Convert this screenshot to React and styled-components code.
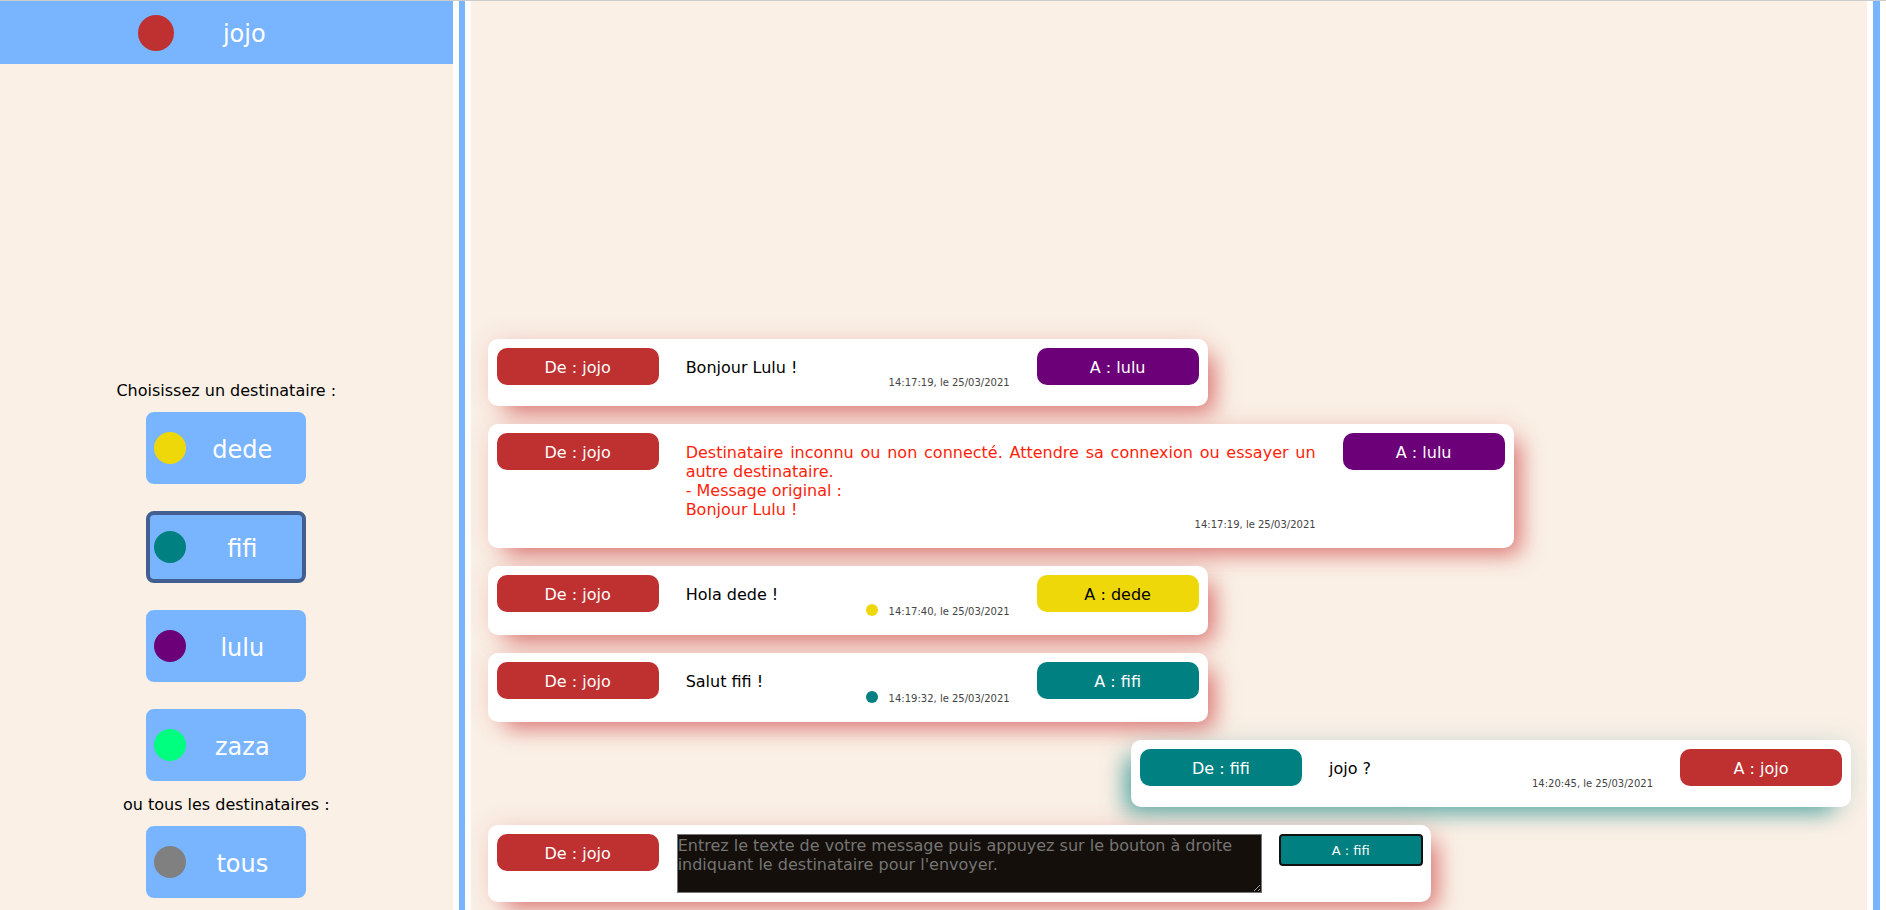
import React, { useState } from 'react';
import styled, { createGlobalStyle } from 'styled-components';

const GlobalStyle = createGlobalStyle`
  *, *::before, *::after { box-sizing: border-box; }
  body {
    margin: 0;
    background: #fff;
    color: #000;
    font-family: Verdana, "DejaVu Sans", sans-serif;
    font-size: 16px;
    line-height: 19px;
  }
`;

const Page = styled.div`
  display: flex;
  height: 100vh;
  border-top: 1px solid #ccc;
`;

const Sidebar = styled.aside`
  flex: 0 0 24%;
  display: flex;
  flex-direction: column;
  background: #faf0e6;
`;

const Separator = styled.div`
  flex: 0 0 ${(p) => (p.$end ? 19 : 18)}px;
  border: solid #fff;
  border-width: 0 6px;
  background: #79b4ff;
`;

const UserHeader = styled.header`
  display: flex;
  align-items: center;
  justify-content: center;
  height: 63px;
  background: #79b4ff;
`;

const Dot = styled.span`
  flex: none;
  width: ${(p) => p.$size}px;
  height: ${(p) => p.$size}px;
  border-radius: 50%;
  background: ${(p) => p.$color};
`;

const UserName = styled.h1`
  width: 140px;
  margin: 0;
  padding-top: 3px;
  color: #fff;
  font-size: 24px;
  font-weight: 400;
  line-height: 28px;
  text-align: center;
`;

const Recipients = styled.nav`
  display: flex;
  flex-direction: column;
  align-items: center;
  margin-top: auto;
  padding-bottom: 12px;
`;

const Hint = styled.p`
  margin: 14px 0 12px;
`;

const RecipientList = styled.div`
  display: flex;
  flex-direction: column;
  gap: 27px;
`;

const RecipientButton = styled.button`
  display: flex;
  align-items: center;
  width: 160px;
  height: 72px;
  padding: 0 4px;
  border: 4px solid ${(p) => (p.$selected ? '#435f91' : '#79b4ff')};
  border-radius: 8px;
  background: #79b4ff;
  color: #fff;
  font: 24px/28px Verdana, "DejaVu Sans", sans-serif;
  cursor: pointer;
`;

const RecipientName = styled.span`
  flex: 1;
  padding-top: 3px;
  text-align: center;
`;

const Conversation = styled.main`
  flex: 1;
  min-width: 0;
  display: flex;
  flex-direction: column;
  justify-content: flex-end;
  align-items: flex-start;
  gap: 18px;
  padding: 0 16px 8px 17px;
  background: #faf0e6;
  overflow: hidden;
`;

const Card = styled.article`
  display: flex;
  align-items: flex-start;
  align-self: ${(p) => (p.$received ? 'flex-end' : 'flex-start')};
  max-width: 1026px;
  padding: 9px;
  border-radius: 10px;
  background: #fff;
  box-shadow:
    ${(p) => (p.$received ? '-12px' : '12px')} 12px 22px -6px ${(p) => p.$shadow},
    0 0 27px ${(p) => p.$halo};
`;

const ComposerCard = styled(Card).attrs({ as: 'form' })`
  width: 100%;
  max-width: 943px;
  padding-right: 8px;
`;

const Tag = styled.span`
  flex: none;
  width: 162px;
  padding: 10px 9px 8px;
  border-radius: 10px;
  background: ${(p) => p.$color};
  color: ${(p) => (p.$dark ? '#000' : '#fff')};
  text-align: center;
`;

const Body = styled.div`
  min-width: 378px;
  padding: 10px 27px 8px;
`;

const Text = styled.p`
  margin: 0;
  color: ${(p) => (p.$error ? '#ff1e0a' : '#000')};
  text-align: justify;
  white-space: pre-line;
`;

const Stamp = styled.footer`
  display: flex;
  align-items: flex-start;
  justify-content: flex-end;
  gap: 6px;
  height: ${(p) => (p.$seen ? 14 : 12)}px;
`;

const Time = styled.time`
  min-width: 126px;
  padding-top: ${(p) => (p.$seen ? 2 : 0)}px;
  color: #444;
  font-size: 10px;
  line-height: 12px;
  text-align: right;
`;

const MessageInput = styled.textarea`
  flex: 1;
  min-width: 0;
  height: 59px;
  margin: 0 17px 0 18px;
  padding: 1px 0 0;
  border: 1px solid #767676;
  background: #140f0a;
  color: #fff;
  font: 16px/19px Verdana, "DejaVu Sans", sans-serif;
  resize: both;

  &::placeholder { color: #757575; }
`;

const SendButton = styled.button`
  flex: none;
  width: 144px;
  height: 32px;
  padding: 2px 0 0;
  border: 2px solid #111;
  border-radius: 4px;
  background: ${(p) => p.$color};
  color: #fff;
  font: 13px/16px Verdana, "DejaVu Sans", sans-serif;
  cursor: pointer;
`;

const COLORS = {
  jojo: '#bf3030',
  dede: '#eed80a',
  fifi: '#008080',
  lulu: '#6b0078',
  zaza: '#00ff7f',
  tous: '#808080',
};

const SHADOWS = {
  jojo: ['rgba(200, 48, 48, 0.6)', 'rgba(200, 48, 48, 0.13)'],
  fifi: ['rgba(0, 128, 128, 0.6)', 'rgba(0, 128, 128, 0.13)'],
};

const MESSAGES = [
  { from: 'jojo', to: 'lulu', text: 'Bonjour Lulu !', time: '14:17:19, le 25/03/2021' },
  {
    from: 'jojo',
    to: 'lulu',
    error: true,
    text: 'Destinataire inconnu ou non connecté. Attendre sa connexion ou essayer un autre destinataire.\n- Message original :\nBonjour Lulu !',
    time: '14:17:19, le 25/03/2021',
  },
  { from: 'jojo', to: 'dede', seen: true, text: 'Hola dede !', time: '14:17:40, le 25/03/2021' },
  { from: 'jojo', to: 'fifi', seen: true, text: 'Salut fifi !', time: '14:19:32, le 25/03/2021' },
  { from: 'fifi', to: 'jojo', text: 'jojo ?', time: '14:20:45, le 25/03/2021' },
];

function Recipient({ name, selected, onSelect }) {
  return (
    <RecipientButton type="button" $selected={selected} aria-pressed={selected} onClick={() => onSelect(name)}>
      <Dot $size={32} $color={COLORS[name]} />
      <RecipientName>{name}</RecipientName>
    </RecipientButton>
  );
}

function Message({ from, to, text, time, error, seen }) {
  const [shadow, halo] = SHADOWS[from];
  return (
    <Card $received={from !== 'jojo'} $shadow={shadow} $halo={halo}>
      <Tag $color={COLORS[from]}>De : {from}</Tag>
      <Body>
        <Text $error={error}>{text}</Text>
        <Stamp $seen={seen}>
          {seen && <Dot $size={12} $color={COLORS[to]} />}
          <Time $seen={seen}>{time}</Time>
        </Stamp>
      </Body>
      <Tag $color={COLORS[to]} $dark={to === 'dede'}>A : {to}</Tag>
    </Card>
  );
}

export default function App() {
  const [recipient, setRecipient] = useState('fifi');
  const [draft, setDraft] = useState('');
  const [shadow, halo] = SHADOWS.jojo;

  return (
    <>
      <GlobalStyle />
      <Page>
        <Sidebar>
          <UserHeader>
            <Dot $size={36} $color={COLORS.jojo} />
            <UserName>jojo</UserName>
          </UserHeader>
          <Recipients>
            <Hint>Choisissez un destinataire :</Hint>
            <RecipientList>
              {['dede', 'fifi', 'lulu', 'zaza'].map((name) => (
                <Recipient key={name} name={name} selected={recipient === name} onSelect={setRecipient} />
              ))}
            </RecipientList>
            <Hint>ou tous les destinataires :</Hint>
            <Recipient name="tous" selected={recipient === 'tous'} onSelect={setRecipient} />
          </Recipients>
        </Sidebar>
        <Separator />
        <Conversation>
          {MESSAGES.map((message) => (
            <Message key={message.time + message.text} {...message} />
          ))}
          <ComposerCard $shadow={shadow} $halo={halo} onSubmit={(e) => e.preventDefault()}>
            <Tag $color={COLORS.jojo}>De : jojo</Tag>
            <MessageInput
              aria-label="Message"
              value={draft}
              onChange={(e) => setDraft(e.target.value)}
              placeholder="Entrez le texte de votre message puis appuyez sur le bouton à droite indiquant le destinataire pour l'envoyer."
            />
            <SendButton type="submit" $color={COLORS[recipient]}>A : {recipient}</SendButton>
          </ComposerCard>
        </Conversation>
        <Separator $end />
      </Page>
    </>
  );
}
